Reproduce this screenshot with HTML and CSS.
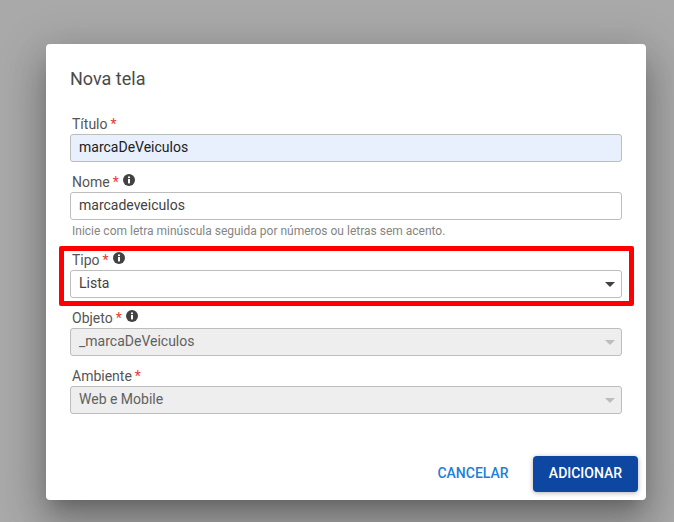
FILE: index.html
```html
<!DOCTYPE html>
<html lang="en">
<head>
    <meta charset="UTF-8">
    <meta name="viewport" content="width=device-width, initial-scale=1.0">
    <title>Nova tela</title>
    <link rel="stylesheet" href="styles.css">
</head>
<body>

<section class="dialog">
    <h2 class="dialog-title">Nova tela</h2>

    <div class="field">
        <div class="field-label">Título <span class="req">*</span></div>
        <div class="control autofilled">marcaDeVeiculos</div>
    </div>

    <div class="field">
        <div class="field-label">Nome <span class="req">*</span>
            <svg class="info" viewBox="0 0 12 12"><circle cx="6" cy="6" r="6"/><rect class="info-mark" x="5" y="5" width="2" height="4.4"/><rect class="info-mark" x="5" y="2.5" width="2" height="1.6"/></svg>
        </div>
        <div class="control">marcadeveiculos</div>
        <div class="hint">Inicie com letra minúscula seguida por números ou letras sem acento.</div>
    </div>

    <!-- Red highlight sits over the Tipo field -->
    <div class="field highlighted">
        <div class="field-label">Tipo <span class="req">*</span>
            <svg class="info" viewBox="0 0 12 12"><circle cx="6" cy="6" r="6"/><rect class="info-mark" x="5" y="5" width="2" height="4.4"/><rect class="info-mark" x="5" y="2.5" width="2" height="1.6"/></svg>
        </div>
        <div class="control select">Lista <span class="arrow"></span></div>
    </div>

    <div class="field">
        <div class="field-label">Objeto <span class="req">*</span>
            <svg class="info" viewBox="0 0 12 12"><circle cx="6" cy="6" r="6"/><rect class="info-mark" x="5" y="5" width="2" height="4.4"/><rect class="info-mark" x="5" y="2.5" width="2" height="1.6"/></svg>
        </div>
        <div class="control select disabled">_marcaDeVeiculos <span class="arrow"></span></div>
    </div>

    <div class="field">
        <div class="field-label">Ambiente <span class="req">*</span></div>
        <div class="control select disabled">Web e Mobile <span class="arrow"></span></div>
    </div>

    <div class="actions">
        <button class="btn-cancel">CANCELAR</button>
        <button class="btn-add">ADICIONAR</button>
    </div>
</section>

</body>
</html>
```

FILE: styles.css
```css
html, body {
    height: 100%;
}

body {
    margin: 0;
    padding: 44px 28px 22px 46px;
    box-sizing: border-box;
    overflow: hidden;
    background-color: #a9a9a9;
    font-family: Roboto, "Liberation Sans", sans-serif;
}

.dialog {
    width: 600px;
    height: 456px;
    box-sizing: border-box;
    padding: 24px 24px 0;
    background-color: #fff;
    border-radius: 4px;
    box-shadow: 0 11px 15px -7px rgba(0, 0, 0, 0.2), 0 24px 38px 3px rgba(0, 0, 0, 0.2), 0 9px 46px 8px rgba(0, 0, 0, 0.14);
    display: flex;
    flex-direction: column;
}

.dialog-title {
    margin: 0 0 24px;
    height: 21px;
    line-height: 21px;
    font-size: 18px;
    font-weight: 400;
    color: #4a4a4a;
}

.field {
    margin-bottom: 9px;
    position: relative;
}

.field-label {
    height: 21px;
    box-sizing: border-box;
    padding: 2px 2px 0;
    display: flex;
    align-items: center;
    gap: 3px;
    font-size: 14px;
    line-height: 19px;
    color: #555;
}

.req {
    color: #e53935;
}

.info {
    width: 12px;
    height: 12px;
    margin: -6px 0 0 1.5px;
    fill: #424242;
}

.info-mark {
    fill: #fff;
}

.control {
    height: 28px;
    box-sizing: border-box;
    padding: 0 8px 2px;
    display: flex;
    align-items: center;
    justify-content: space-between;
    border: 1px solid #bdbdbd;
    border-radius: 3px;
    font-size: 14px;
    color: #424242;
}

.autofilled {
    background-color: #e8f0fe;
    color: #212121;
}

.disabled {
    background-color: #eeeeee;
    color: #616161;
}

.arrow {
    width: 0;
    height: 0;
    margin: 2px -2px 0 0;
    border-left: 5px solid transparent;
    border-right: 5px solid transparent;
    border-top: 5px solid #424242;
}

.disabled .arrow {
    border-top-color: #bdbdbd;
}

.hint {
    height: 12px;
    margin: 5px 0 3px;
    padding: 0 2px;
    font-size: 12px;
    line-height: 12px;
    color: #858585;
}

.highlighted::after {
    content: "";
    position: absolute;
    left: -11px;
    right: -12px;
    top: -3px;
    bottom: -8px;
    border: 5px solid #ff0000;
    border-radius: 2px;
    pointer-events: none;
}

.actions {
    margin-top: auto;
    margin-right: -16px;
    padding-bottom: 8px;
    display: flex;
    justify-content: flex-end;
    align-items: center;
}

.actions button {
    border: none;
    font-family: inherit;
    font-size: 14px;
    font-weight: 500;
    height: 36px;
    padding: 0 0 2px;
    border-radius: 4px;
    cursor: pointer;
}

.btn-cancel {
    width: 72px;
    margin-right: 24px;
    background: none;
    color: #1e7fd8;
}

.btn-add {
    width: 105px;
    background-color: #0d47a1;
    color: #fff;
    box-shadow: 0 1px 5px rgba(0, 0, 0, 0.3);
}
```
